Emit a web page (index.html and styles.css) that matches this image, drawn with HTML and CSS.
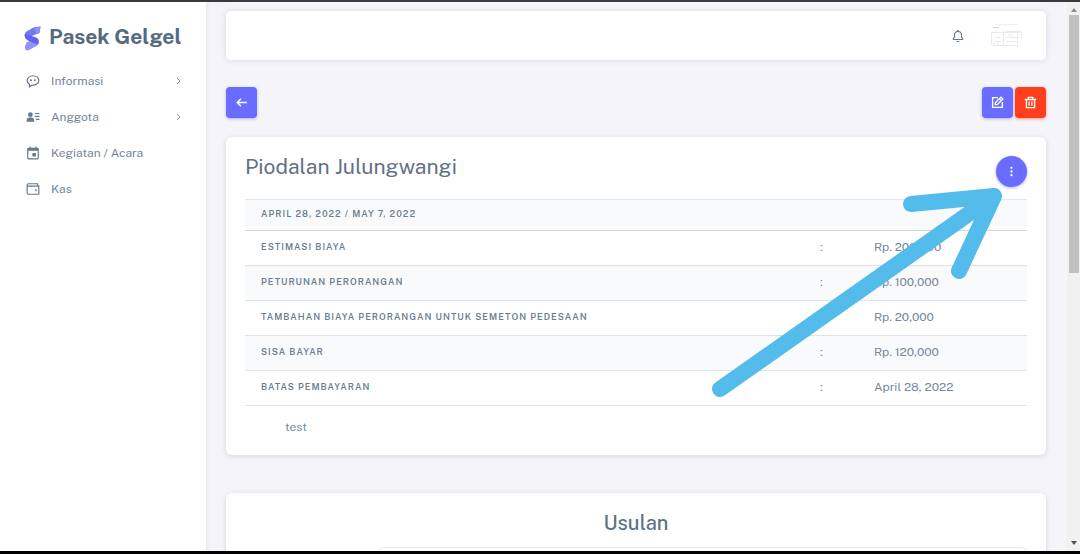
FILE: index.html
```html
<!DOCTYPE html>
<html lang="id">
<head>
<meta charset="utf-8">
<meta name="viewport" content="width=device-width, initial-scale=1">
<title>Pasek Gelgel</title>
<link rel="stylesheet" href="styles.css">
</head>
<body>
<div class="app">
  <aside class="sidebar">
    <a class="brand" href="#">
      <svg class="brand-logo" viewBox="0 0 17 25" aria-hidden="true">
        <path d="M9.500 1.500 16.500.5 15.500 7 11.500 8.500 6.500 10.500 8 14 2.500 13C0 11 0 7.500 2.500 5.500Z" fill="#7476f6"/>
        <path d="M2.500 16.500 10 13 14.800 15.500C14.800 18 14 19.500 11.500 20.500L4.500 24.300C2 24.800.8 23.500 1 20.500Z" fill="#9193f9"/>
        <path d="M1 8 6.500 9.800 11.500 11.200C15 12.500 15.800 15.500 13.800 18.500L9.500 17 3.500 14.300C1.200 12.800.2 10.500 1 8Z" fill="#6063f3"/>
        <path d="M9.500 1.500 16.500.5 15.500 7 12.500 8Z" fill="#8b8dfa"/>
      </svg>
      <span>Pasek Gelgel</span>
    </a>
    <nav class="menu">
      <a class="menu-item" href="#">
        <svg class="icon" viewBox="0 0 24 24" aria-hidden="true"><path d="M12 3C6.500 3 2 6.600 2 11.200c0 2.700 1.600 5 4 6.500V22l4.500-2.900c.5.100 1 .1 1.500.1 5.500 0 10-3.600 10-8.100S17.500 3 12 3Z" fill="none" stroke="currentColor" stroke-width="2"/><circle cx="8.500" cy="10.500" r="1.700" fill="currentColor"/><circle cx="15" cy="10.500" r="1.700" fill="currentColor"/></svg>
        <span class="menu-label">Informasi</span>
        <svg class="chevron" viewBox="0 0 10 10" aria-hidden="true"><path d="m3 2 3 3-3 3"/></svg>
      </a>
      <a class="menu-item" href="#">
        <svg class="icon" viewBox="0 0 24 24" fill="currentColor" aria-hidden="true"><circle cx="7.500" cy="8" r="4"/><path d="M1 20v-2c0-3 2-5 5-5h3c3 0 5 2 5 5v2ZM15 5h8v2h-8zM15 10h8v2h-8zM17 15h6v2h-6z"/></svg>
        <span class="menu-label">Anggota</span>
        <svg class="chevron" viewBox="0 0 10 10" aria-hidden="true"><path d="m3 2 3 3-3 3"/></svg>
      </a>
      <a class="menu-item" href="#">
        <svg class="icon" viewBox="0 0 24 24" fill="currentColor" aria-hidden="true"><path fill-rule="evenodd" d="M6 1h2v2h8V1h2v2h2a2 2 0 0 1 2 2v16a2 2 0 0 1-2 2H4a2 2 0 0 1-2-2V5a2 2 0 0 1 2-2h2ZM4 8v13h16V8Z"/><path d="M11 12h6v6h-6z"/></svg>
        <span class="menu-label">Kegiatan / Acara</span>
      </a>
      <a class="menu-item" href="#">
        <svg class="icon" viewBox="0 0 24 24" fill="none" stroke="currentColor" stroke-width="2" aria-hidden="true"><path d="M20 7V3H4a2 2 0 0 0-2 2v14a2 2 0 0 0 2 2h18V7H4a2 2 0 0 1-2-2"/><path d="M17 12v4"/></svg>
        <span class="menu-label">Kas</span>
      </a>
    </nav>
  </aside>

  <main class="content">
    <header class="topbar">
      <button class="bell" type="button" aria-label="Notifikasi">
        <svg viewBox="0 0 24 24" fill="currentColor" aria-hidden="true"><path d="M19 13.600V10c0-3.200-2.200-5.900-5.100-6.700a2 2 0 0 0-3.800 0C7.200 4.100 5 6.800 5 10v3.600l-1.700 1.700c-.2.200-.3.400-.3.700v2c0 .6.400 1 1 1h16c.6 0 1-.4 1-1v-2c0-.3-.1-.5-.3-.7ZM19 17H5v-.6l1.700-1.700c.2-.2.300-.4.300-.7v-4c0-2.800 2.200-5 5-5s5 2.200 5 5v4c0 .3.100.5.300.7l1.700 1.700ZM12 22.500c1.300 0 2.400-.9 2.800-2H9.200c.4 1.100 1.500 2 2.800 2Z"/></svg>
      </button>
      <svg class="avatar" viewBox="0 0 34 26" role="img" aria-label="Profil" fill="none" stroke="#ebebeb">
        <path d="M5 1.500h23" stroke="#f0f0f0"/><path d="M3 4.500h6" stroke="#d0d0d0"/>
        <path d="M1 9.500h29M3 22.500h25M1.500 10v12M13.500 8v14M5 18.500h6M5 14.500h5M16 8.500h15M16 14.500h14M16 18.500h12M27.500 11v11M31.500 9v7M4 22v-3M8 22v-4M18 12h5"/>
      </svg>
    </header>

    <div class="toolbar">
      <button class="btn" type="button" aria-label="Kembali">
        <svg viewBox="0 0 24 24" fill="none" stroke="currentColor" stroke-width="2.500" aria-hidden="true"><path d="M22 12H4M11 5l-7 7 7 7"/></svg>
      </button>
      <div class="actions">
        <button class="btn" type="button" aria-label="Ubah">
          <svg viewBox="0 0 24 24" fill="none" stroke="currentColor" stroke-width="2.500" aria-hidden="true"><path d="M13 3H3v18h18V11"/><path d="M8 12.500 18.500 2 22 5.500 11.500 16H8ZM15.500 5l3.500 3.500"/></svg>
        </button>
        <button class="btn btn-danger" type="button" aria-label="Hapus">
          <svg viewBox="0 0 24 24" fill="none" stroke="currentColor" stroke-width="2.500" aria-hidden="true"><path d="M1.500 6.500h21M8 6V2.500h8V6M4.500 7v14.500h15V7M9.500 10v8M14.500 10v8"/></svg>
        </button>
      </div>
    </div>

    <section class="card detail">
      <div class="card-head">
        <h1 class="title">Piodalan Julungwangi</h1>
        <button class="btn btn-round" type="button" aria-label="Menu">
          <svg viewBox="0 0 24 24" fill="currentColor" aria-hidden="true"><circle cx="12" cy="4" r="2.500"/><circle cx="12" cy="12" r="2.500"/><circle cx="12" cy="20" r="2.500"/></svg>
        </button>
      </div>
      <table class="table">
        <colgroup><col><col class="col-sep"><col class="col-value"></colgroup>
        <thead><tr><th colspan="3" scope="colgroup">April 28, 2022 / May 7, 2022</th></tr></thead>
        <tbody>
          <tr><th scope="row">Estimasi Biaya</th><td>:</td><td>Rp. 200,000</td></tr>
          <tr><th scope="row">Peturunan Perorangan</th><td>:</td><td>Rp. 100,000</td></tr>
          <tr><th scope="row">Tambahan Biaya Perorangan untuk Semeton Pedesaan</th><td></td><td>Rp. 20,000</td></tr>
          <tr><th scope="row">Sisa Bayar</th><td>:</td><td>Rp. 120,000</td></tr>
          <tr><th scope="row">Batas Pembayaran</th><td>:</td><td>April 28, 2022</td></tr>
        </tbody>
      </table>
      <p class="note">test</p>
      <svg class="pointer" viewBox="0 0 292 212" fill="none" stroke="#53bcea" stroke-width="16" stroke-linecap="round" stroke-linejoin="round" aria-hidden="true"><path d="M9 201 283 8M200 16 283 8 248 83"/></svg>
    </section>

    <section class="card proposals">
      <h2 class="subtitle">Usulan</h2>
      <div class="proposal-box"></div>
    </section>
  </main>

  <div class="scrollbar" aria-hidden="true">
    <svg class="arrow" viewBox="0 0 6 4"><path d="M0 4 3 0l3 4Z" fill="#8a8a8a"/></svg>
    <div class="thumb"></div>
    <svg class="arrow" viewBox="0 0 6 4"><path d="m0 0 3 4 3-4Z" fill="#505050"/></svg>
  </div>
</div>
</body>
</html>
```
FILE: styles.css
```css
* { box-sizing: border-box; }

body {
  margin: 0;
  font-family: "Public Sans", Inter, "Liberation Sans", sans-serif;
  font-size: 12px;
  line-height: 18px;
  color: #77889b;
  background: #f4f4f9;
}

button {
  border: 0;
  padding: 0;
  font: inherit;
  cursor: pointer;
}

a { color: inherit; text-decoration: none; }

svg { display: block; }

.app {
  display: flex;
  height: 100vh;
  overflow: hidden;
  border-top: 2px solid #3c393e;
  border-bottom: 3px solid #000;
}

.sidebar {
  flex: 0 0 206px;
  min-width: 0;
  padding: 19px 20px 0;
  background: #fff;
  box-shadow: 0 0 4px rgba(67, 89, 113, 0.12);
}

.brand {
  display: flex;
  align-items: center;
  gap: 8px;
  height: 32px;
  padding-left: 4px;
  font-size: 21px;
  font-weight: 700;
  color: #566a7f;
  white-space: nowrap;
}

.brand-logo { width: 17px; height: 25px; flex: none; margin-top: 2px; }

.menu { display: grid; gap: 4px; padding-top: 12px; }

.menu-item {
  display: flex;
  align-items: center;
  height: 32px;
  padding: 0 2px 0 6px;
  color: #748496;
}

.icon { width: 14px; height: 14px; margin-right: 11px; color: #66788b; }

.menu-label { flex: 1; }

.chevron {
  width: 10px;
  height: 10px;
  fill: none;
  stroke: #8592a1;
  stroke-width: 1;
}

.content {
  flex: 1;
  min-width: 0;
  padding: 9px 21px 0 20px;
}

.topbar {
  display: flex;
  align-items: center;
  justify-content: flex-end;
  gap: 25px;
  height: 49px;
  padding-right: 22px;
  background: #fff;
  border-radius: 5px;
  box-shadow: 0 0 6px rgba(67, 89, 113, 0.15);
}

.bell { background: none; color: #66788b; }

.bell svg { width: 14px; height: 14px; }

.avatar { width: 34px; height: 26px; }

.toolbar {
  display: flex;
  justify-content: space-between;
  padding: 27px 0 19px;
}

.actions { display: flex; gap: 2px; }

.btn {
  display: grid;
  place-items: center;
  width: 31px;
  height: 31px;
  border-radius: 4px;
  color: #fff;
  background: #696cff;
  box-shadow: 0 1px 3px rgba(105, 108, 255, 0.5);
}

.btn svg { width: 13px; height: 13px; }

.btn-danger {
  background: #ff3e1d;
  box-shadow: 0 1px 3px rgba(255, 62, 29, 0.5);
}

.btn-round { border-radius: 50%; }

.btn-round svg { width: 11px; height: 11px; }

.card {
  padding: 19px;
  background: #fff;
  border-radius: 6px;
  box-shadow: 0 1px 5px rgba(67, 89, 113, 0.18);
}

.detail { position: relative; }

.card-head {
  display: flex;
  justify-content: space-between;
  align-items: flex-start;
  padding-bottom: 12px;
}

.title, .subtitle {
  margin: 0;
  color: #5f7285;
  line-height: 22px;
}

.title { font-size: 21px; font-weight: 400; }

.table {
  width: 100%;
  border-collapse: collapse;
  table-layout: fixed;
  border-top: 1px solid #e3e6ea;
}

.col-sep { width: 54px; }

.col-value { width: 169px; }

.table th, .table td {
  height: 35px;
  padding: 0 16px 2px;
  text-align: left;
  border-bottom: 1px solid #dfe2e6;
}

.table th {
  font-size: 9px;
  font-weight: 600;
  letter-spacing: 1px;
  text-transform: uppercase;
  color: #6b7d90;
}

.table thead th { height: 31px; background: #f9fafc; border-bottom-color: #d3d7dc; }

.table tbody tr:nth-child(even) { background: #f9fafc; }

.note { margin: 0; padding: 12px 40px 0; }

.pointer {
  position: absolute;
  top: 51px;
  right: 43px;
  width: 292px;
  height: 212px;
  pointer-events: none;
}

.proposals { margin-top: 38px; height: 200px; }

.subtitle { font-size: 20px; font-weight: 500; text-align: center; }

.proposal-box {
  height: 100px;
  margin: 13px 0 0 134px;
  border: 1px solid #e6e8ec;
  border-radius: 5px;
}

.scrollbar {
  display: flex;
  flex-direction: column;
  align-items: center;
  flex: 0 0 13px;
  padding: 6px 0;
  background: #f1f1f1;
}

.arrow { width: 6px; height: 4px; }

.thumb {
  width: 10px;
  height: 48%;
  margin: 3px 0 auto;
  background: #c1c1c1;
}
```
